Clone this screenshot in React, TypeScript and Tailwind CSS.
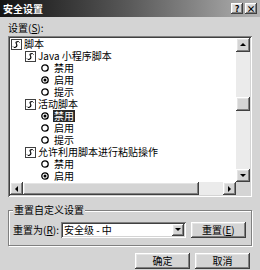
import React from 'react';

const raised =
  'bg-[#d4d4d4] shadow-[inset_-1px_-1px_0_#404040,inset_1px_1px_0_#ffffff,inset_-2px_-2px_0_#808080,inset_2px_2px_0_#e4e4e4]';
const sunken =
  'shadow-[inset_1px_1px_0_#808080,inset_-1px_-1px_0_#ffffff,inset_2px_2px_0_#404040,inset_-2px_-2px_0_#d4d4d4]';

type Row =
  | { kind: 'folder'; level: number; label: string }
  | { kind: 'radio'; label: string; checked?: boolean; selected?: boolean };

const rows: Row[] = [
  { kind: 'folder', level: 0, label: '脚本' },
  { kind: 'folder', level: 1, label: 'Java 小程序脚本' },
  { kind: 'radio', label: '禁用' },
  { kind: 'radio', label: '启用', checked: true },
  { kind: 'radio', label: '提示' },
  { kind: 'folder', level: 1, label: '活动脚本' },
  { kind: 'radio', label: '禁用', checked: true, selected: true },
  { kind: 'radio', label: '启用' },
  { kind: 'radio', label: '提示' },
  { kind: 'folder', level: 1, label: '允许利用脚本进行粘贴操作' },
  { kind: 'radio', label: '禁用' },
  { kind: 'radio', label: '启用', checked: true },
  { kind: 'radio', label: '提示' },
];

const ScriptIcon = () => (
  <svg width="11" height="11" viewBox="0 0 11 11" className="shrink-0">
    <rect x="0.5" y="0.5" width="10" height="10" fill="#ffffff" stroke="#404040" />
    <path d="M7.5 2.5 C5 2.5 4.5 3.5 5.5 5 C6.5 6.5 5.5 8.5 3 8.5" fill="none" stroke="#000" strokeWidth="1.2" />
    <path d="M7.5 2.5 L8.5 3.5 M3 8.5 L2 7.5" stroke="#000" strokeWidth="1" />
  </svg>
);

const Radio = ({ checked }: { checked?: boolean }) => (
  <svg width="8" height="8" viewBox="0 0 8 8" className="shrink-0">
    <circle cx="4" cy="4" r="3.2" fill="#ffffff" stroke="#000" strokeWidth="1.3" />
    {checked && <circle cx="4" cy="4" r="1.5" fill="#000" />}
  </svg>
);

const Arrow = ({ dir }: { dir: 'up' | 'down' | 'left' | 'right' }) => {
  const pts = {
    up: '1,5 4,2 7,5',
    down: '1,2 4,5 7,2',
    left: '5,1 2,4 5,7',
    right: '2,1 5,4 2,7',
  }[dir];
  return (
    <svg width="8" height="8" viewBox="0 0 8 8">
      <polygon points={pts} fill="#000" />
    </svg>
  );
};

export default function App() {
  return (
    <div
      className="w-[260px] h-[270px] bg-[#d4d4d4] flex flex-col text-[10px] leading-[12px] text-black overflow-hidden"
      style={{ fontFamily: '"Noto Sans CJK SC", "Noto Sans", sans-serif' }}
    >
      {/* title bar */}
      <div className="h-[17px] flex items-center pl-[3px] pr-[3px] bg-gradient-to-r from-[#141414] via-[#5a5a5a] to-[#b4b4b4]">
        <span className="text-white font-bold text-[10px]">安全设置</span>
        <div className="ml-auto flex gap-[2px]">
          <div className={`${raised} w-[12px] h-[11px] flex items-center justify-center text-[9px] font-bold leading-none`}>?</div>
          <div className={`${raised} w-[12px] h-[11px] flex items-center justify-center text-[9px] font-bold leading-none`}>×</div>
        </div>
      </div>

      <div className="pl-[8px] pt-[5px]">设置(<span className="underline">S</span>):</div>

      {/* tree list */}
      <div className={`${sunken} bg-white mx-[8px] mt-[2px] h-[161px] p-[2px] grid grid-cols-[1fr_14px] grid-rows-[1fr_13px]`}>
        <div className="overflow-hidden pl-[1px]">
          {rows.map((r, i) =>
            r.kind === 'folder' ? (
              <div
                key={i}
                className={`h-[12px] flex items-center gap-[2px] whitespace-nowrap ${r.level === 0 ? 'pl-[0px]' : 'pl-[14px]'}`}
              >
                <ScriptIcon />
                <span>{r.label}</span>
              </div>
            ) : (
              <div key={i} className="h-[12px] flex items-center pl-[30px] gap-[4px] whitespace-nowrap">
                <Radio checked={r.checked} />
                <span className={r.selected ? 'bg-[#2a2a2a] text-white px-[1px]' : 'px-[1px]'}>{r.label}</span>
              </div>
            )
          )}
        </div>

        {/* vertical scrollbar */}
        <div className="flex flex-col bg-[#ebebeb]">
          <div className={`${raised} h-[14px] flex items-center justify-center`}>
            <Arrow dir="up" />
          </div>
          <div className="h-[45px]" />
          <div className={`${raised} h-[14px]`} />
          <div className="flex-1" />
          <div className={`${raised} h-[13px] flex items-center justify-center`}>
            <Arrow dir="down" />
          </div>
        </div>

        {/* horizontal scrollbar */}
        <div className="flex bg-[#ebebeb]">
          <div className={`${raised} w-[13px] flex items-center justify-center`}>
            <Arrow dir="left" />
          </div>
          <div className={`${raised} w-[176px]`} />
          <div className="flex-1" />
          <div className={`${raised} w-[13px] flex items-center justify-center`}>
            <Arrow dir="right" />
          </div>
        </div>
        <div className="bg-[#d4d4d4]" />
      </div>

      {/* group box */}
      <div className="relative mx-[8px] mt-[13px] h-[36px] border border-[#808080] shadow-[1px_1px_0_#ffffff,inset_1px_1px_0_#ffffff] flex items-center px-[4px] pt-[3px]">
        <span className="absolute left-[4px] -top-[7px] bg-[#d4d4d4] px-[1px]">重置自定义设置</span>
        <span className="whitespace-nowrap">重置为(<span className="underline">R</span>):</span>
        <div className={`${sunken} bg-white ml-[2px] w-[125px] h-[16px] flex items-center p-[2px]`}>
          <span className="pl-[1px] flex-1 whitespace-nowrap">安全级 - 中</span>
          <div className={`${raised} w-[12px] h-[12px] flex items-center justify-center`}>
            <Arrow dir="down" />
          </div>
        </div>
        <div className={`${raised} ml-[5px] w-[55px] h-[16px] flex items-center justify-center`}>
          重置(<span className="underline">E</span>)
        </div>
      </div>

      {/* bottom buttons */}
      <div className="flex justify-end gap-[5px] pr-[10px] mt-[7px]">
        <div className={`${raised} w-[55px] h-[16px] flex items-center justify-center shadow-[inset_-1px_-1px_0_#000000,inset_1px_1px_0_#ffffff,inset_-2px_-2px_0_#808080,inset_2px_2px_0_#e4e4e4,0_0_0_1px_#000000]`}>
          确定
        </div>
        <div className={`${raised} w-[55px] h-[16px] flex items-center justify-center`}>取消</div>
      </div>
    </div>
  );
}
